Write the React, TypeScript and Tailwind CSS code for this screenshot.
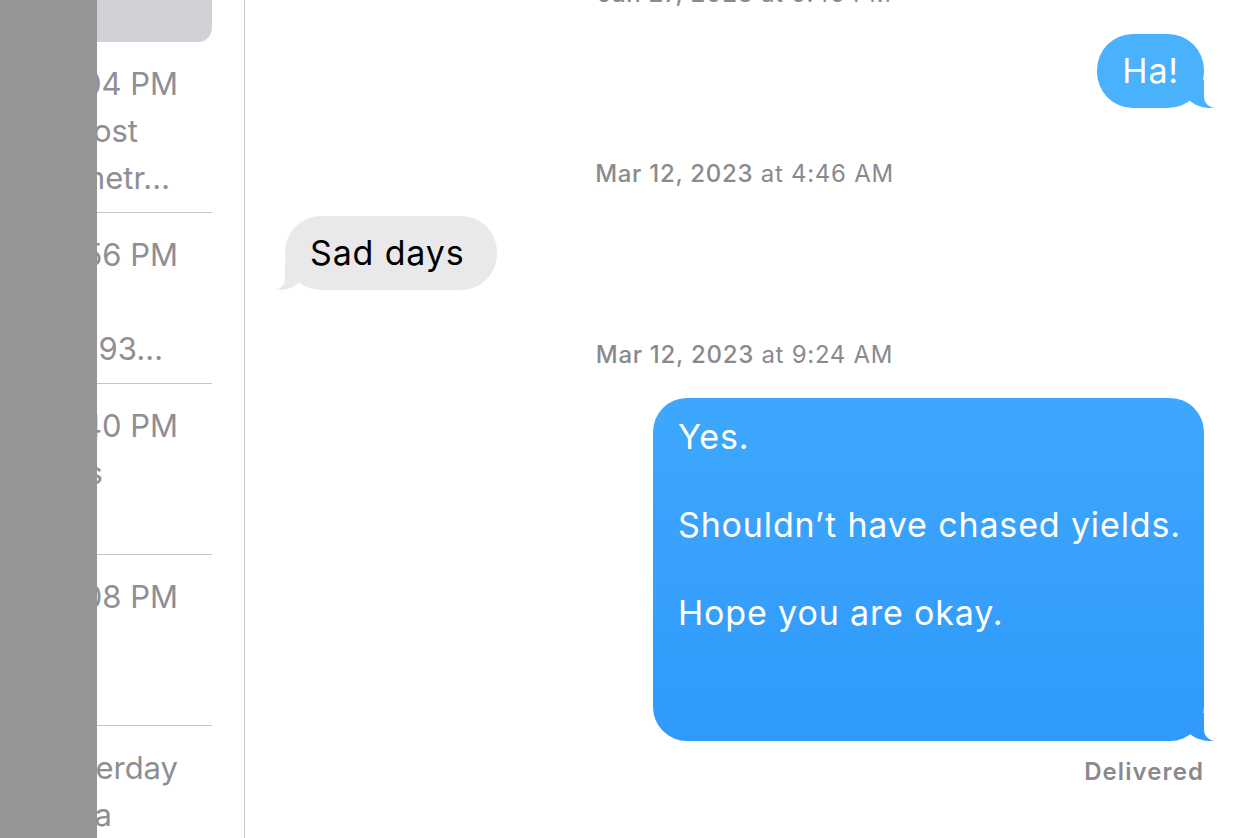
import React from "react";

type Row = {
  time: string;
  lines: { text: string; pad: string }[];
};

const rows: Row[] = [
  {
    time: "4:04 PM",
    lines: [
      { text: "Almost", pad: "pr-[74px]" },
      { text: "symmetr…", pad: "pr-[42px]" },
    ],
  },
  {
    time: "3:56 PM",
    lines: [
      { text: "Ok", pad: "pr-[140px]" },
      { text: "$1,293…", pad: "pr-[49px]" },
    ],
  },
  {
    time: "2:40 PM",
    lines: [{ text: "Thanks", pad: "pr-[109px]" }],
  },
  { time: "1:08 PM", lines: [] },
  {
    time: "Yesterday",
    lines: [{ text: "Ha", pad: "pr-[100px]" }],
  },
];

const Tail = ({ color, left }: { color: string; left?: boolean }) => (
  <svg
    width="32"
    height="28"
    viewBox="0 0 32 28"
    className={
      left
        ? "absolute bottom-0 left-[-12px] -scale-x-100"
        : "absolute bottom-0 right-[-12px]"
    }
  >
    <path
      d="M6 0 H20 V16 C20 22 23 26 30 28 C23 28.5 13 27 6 21 Z"
      fill={color}
    />
  </svg>
);

const Stamp = ({ day, time, className }: { day: string; time: string; className: string }) => (
  <div
    className={`h-[30px] flex items-center justify-center text-[24px] leading-[30px] tracking-[0.03em] text-[#8a8a8e] whitespace-nowrap ${className}`}
  >
    <span className="font-medium">{day}</span>
    <span>&nbsp;at {time}</span>
  </div>
);

export default function App() {
  return (
    <div className="flex h-[838px] w-[1240px] overflow-hidden bg-white font-['Inter','Noto_Sans',sans-serif]">
      <div className="w-[97px] shrink-0 bg-[#959595]" />

      {/* conversation list, mostly covered */}
      <div className="w-[148px] shrink-0 overflow-hidden border-r border-[#c6c6c8]">
        <div className="w-[115px] h-[42px] bg-[#d1d1d6] rounded-br-[14px]" />
        {rows.map((row, i) => (
          <div
            key={i}
            className="w-[115px] h-[171px] border-b border-[#c6c6c8] pt-[18px] text-[31px] leading-[47px] text-[#8e8e93]"
          >
            <div className="flex justify-end pr-[34px] whitespace-nowrap">
              {row.time}
            </div>
            {row.lines.map((l, j) => (
              <div key={j} className={`flex justify-end whitespace-nowrap ${l.pad}`}>
                {l.text}
              </div>
            ))}
          </div>
        ))}
      </div>

      {/* messages */}
      <div className="flex-1 flex flex-col pl-[40px] pr-[36px]">
        <Stamp day="Jan 27, 2023" time="5:45 PM" className="mt-[-21px]" />

        <div className="relative self-end mt-[25px] h-[74px] flex items-center px-[25px] rounded-[36px] bg-[#4ab1fc] text-white text-[34px] leading-[44px] tracking-[0.025em]">
          Ha!
          <Tail color="#4ab1fc" />
        </div>

        <Stamp day="Mar 12, 2023" time="4:46 AM" className="mt-[51px]" />

        <div className="relative self-start mt-[27px] h-[74px] flex items-center pl-[25px] pr-[32px] rounded-[36px] bg-[#e9e9eb] text-black text-[34px] leading-[44px] tracking-[0.025em]">
          Sad days
          <Tail color="#e9e9eb" left />
        </div>

        <Stamp day="Mar 12, 2023" time="9:24 AM" className="mt-[50px]" />

        <div className="relative self-end mt-[28px] w-[551px] h-[343px] pt-[17px] pl-[25px] pr-[20px] rounded-[34px] bg-gradient-to-b from-[#3ea7fd] to-[#2f9afa] text-white text-[34px] leading-[44px] tracking-[0.025em]">
          <p>Yes.</p>
          <p className="mt-[44px]">Shouldn’t have chased yields.</p>
          <p className="mt-[44px]">Hope you are okay.</p>
          <Tail color="#2f9afa" />
        </div>

        <div className="self-end mt-[16px] h-[30px] flex items-center text-[24px] font-semibold tracking-[0.045em] text-[#8a8a8e]">
          Delivered
        </div>
      </div>
    </div>
  );
}
